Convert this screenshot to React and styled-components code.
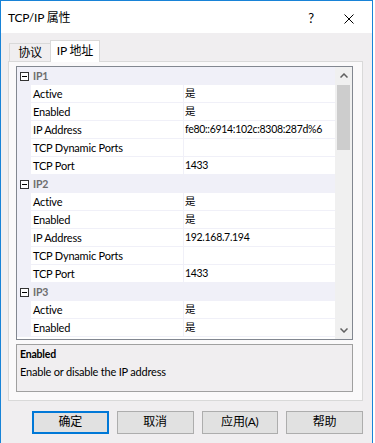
import React from 'react';
import styled, { createGlobalStyle } from 'styled-components';

const GlobalStyle = createGlobalStyle`
  html, body {
    margin: 0;
    padding: 0;
    background: #ffffff;
  }
  body {
    font-family: Lato, "Noto Sans CJK SC", sans-serif;
    font-size: 11px;
    letter-spacing: -0.2px;
    line-height: 1.2;
    color: #000;
  }
`;

const Window = styled.div`
  width: 373px;
  height: 443px;
  box-sizing: border-box;
  border: 1px solid #1883d7;
  border-bottom: none;
  display: flex;
  flex-direction: column;
  background: #f0eef0;
  overflow: hidden;
`;

const TitleBar = styled.div`
  height: 32px;
  flex: none;
  background: #ffffff;
  display: flex;
  align-items: center;
  padding-left: 7px;
  font-size: 12px;
`;

const Title = styled.div`
  flex: 1;
  padding-top: 3px;
`;

const TitleButton = styled.div`
  width: ${p => p.$w}px;
  height: 32px;
  display: flex;
  align-items: center;
  justify-content: center;
  padding-top: 3px;
  box-sizing: border-box;
  font-size: 13px;
  color: #000;
`;

const Body = styled.div`
  flex: 1;
  display: flex;
  flex-direction: column;
  padding: 8px 9px 0 7px;
`;

const TabRow = styled.div`
  display: flex;
  align-items: flex-end;
  height: 21px;
  padding-left: 1px;
  margin-bottom: -1px;
  position: relative;
  z-index: 1;
`;

const Tab = styled.div`
  box-sizing: border-box;
  width: ${p => (p.$active ? 50 : 42)}px;
  height: ${p => (p.$active ? 22 : 19)}px;
  padding-top: ${p => (p.$active ? 0 : 2)}px;
  border: 1px solid #d9d9d9;
  border-bottom: ${p => (p.$active ? 'none' : '1px solid #d9d9d9')};
  margin-left: ${p => (p.$active ? -1 : 0)}px;
  background: ${p => (p.$active ? '#ffffff' : '#f0eef0')};
  display: flex;
  align-items: center;
  justify-content: center;
  font-size: 12px;
`;

const Panel = styled.div`
  box-sizing: border-box;
  height: 340px;
  border: 1px solid #d9d9d9;
  background: #faf9fa;
  padding: 4px 9px 0 7px;
  display: flex;
  flex-direction: column;
`;

const Grid = styled.div`
  box-sizing: border-box;
  height: 274px;
  flex: none;
  border: 1px solid #828790;
  background: #ffffff;
  display: flex;
  overflow: hidden;
`;

const Rows = styled.div`
  flex: 1;
  display: flex;
  flex-direction: column;
  overflow: hidden;
`;

const Row = styled.div`
  flex: none;
  height: 18px;
  line-height: 17px;
  display: flex;
  background: ${p => (p.$category ? '#f0f0f8' : '#ffffff')};
`;

const Margin = styled.div`
  width: 14px;
  flex: none;
  background: #f0f0f8;
  display: flex;
  align-items: center;
  justify-content: center;
`;

const CategoryName = styled.div`
  display: flex;
  align-items: center;
  padding-left: 2px;
  font-size: 10.5px;
  font-weight: 700;
  color: #6d6d6d;
`;

const NameCell = styled.div`
  box-sizing: border-box;
  width: 153px;
  flex: none;
  padding-left: 2px;
  border-right: 1px solid #f0f0f8;
  border-bottom: 1px solid #f0f0f8;
  white-space: nowrap;
  overflow: hidden;
`;

const ValueCell = styled.div`
  box-sizing: border-box;
  flex: 1;
  min-width: 0;
  padding-left: 1px;
  border-bottom: 1px solid #f0f0f8;
  font-size: 10.5px;
  letter-spacing: -0.3px;
  white-space: nowrap;
  overflow: hidden;
`;

const ScrollBar = styled.div`
  width: 17px;
  flex: none;
  background: #f0f0f0;
  display: flex;
  flex-direction: column;
`;

const ScrollArrow = styled.div`
  height: 17px;
  flex: none;
  display: flex;
  align-items: center;
  justify-content: center;
`;

const ScrollTrack = styled.div`
  flex: 1;
  display: flex;
  flex-direction: column;
  padding: 1px 2px;
`;

const Thumb = styled.div`
  height: 65px;
  background: #cdcdcd;
`;

const Description = styled.div`
  box-sizing: border-box;
  height: 48px;
  flex: none;
  margin-top: 4px;
  border: 1px solid #a0a0a0;
  background: #f0eef0;
  padding: 2px 3px 0;
  display: flex;
  flex-direction: column;
`;

const DescTitle = styled.div`
  font-weight: 700;
  font-size: 10.5px;
  line-height: 14px;
`;

const DescText = styled.div`
  line-height: 14px;
  margin-top: 4px;
`;

const ButtonRow = styled.div`
  display: flex;
  gap: 8px;
  margin-top: 10px;
  padding-left: 24px;
`;

const Button = styled.div`
  box-sizing: border-box;
  width: 77px;
  height: 23px;
  background: #e1e1e1;
  border: 1px solid ${p => (p.$default ? '#0078d7' : '#adadad')};
  box-shadow: ${p => (p.$default ? 'inset 0 0 0 1px #0078d7' : 'none')};
  display: flex;
  align-items: center;
  justify-content: center;
  font-size: 12px;
`;

const CollapseIcon = () => (
  <svg width="9" height="9" viewBox="0 0 9 9">
    <rect x="0.5" y="0.5" width="8" height="8" fill="#fff" stroke="#333" />
    <line x1="2" y1="4.5" x2="7" y2="4.5" stroke="#000" />
  </svg>
);

const Chevron = ({ up }) => (
  <svg width="8" height="5" viewBox="0 0 8 5">
    <polyline
      points={up ? '0.5,4.5 4,1 7.5,4.5' : '0.5,0.5 4,4 7.5,0.5'}
      fill="none"
      stroke="#606060"
      strokeWidth="1.5"
    />
  </svg>
);

const CloseIcon = () => (
  <svg width="10" height="10" viewBox="0 0 10 10">
    <path d="M0.5 0.5 L9.5 9.5 M9.5 0.5 L0.5 9.5" stroke="#000" strokeWidth="1" />
  </svg>
);

// only the rows that fit in the visible part of the grid
const groups = [
  {
    name: 'IP1',
    props: [
      ['Active', '是'],
      ['Enabled', '是'],
      ['IP Address', 'fe80::6914:102c:8308:287d%6'],
      ['TCP Dynamic Ports', ''],
      ['TCP Port', '1433'],
    ],
  },
  {
    name: 'IP2',
    props: [
      ['Active', '是'],
      ['Enabled', '是'],
      ['IP Address', '192.168.7.194'],
      ['TCP Dynamic Ports', ''],
      ['TCP Port', '1433'],
    ],
  },
  {
    name: 'IP3',
    props: [
      ['Active', '是'],
      ['Enabled', '是'],
    ],
  },
];

export default function App() {
  return (
    <>
      <GlobalStyle />
      <Window>
        <TitleBar>
          <Title>TCP/IP 属性</Title>
          <TitleButton $w={30}>?</TitleButton>
          <TitleButton $w={46}><CloseIcon /></TitleButton>
        </TitleBar>
        <Body>
          <TabRow>
            <Tab>协议</Tab>
            <Tab $active>IP 地址</Tab>
          </TabRow>
          <Panel>
            <Grid>
              <Rows>
                {groups.map(g => (
                  <React.Fragment key={g.name}>
                    <Row $category>
                      <Margin><CollapseIcon /></Margin>
                      <CategoryName>{g.name}</CategoryName>
                    </Row>
                    {g.props.map(([k, v]) => (
                      <Row key={k}>
                        <Margin />
                        <NameCell>{k}</NameCell>
                        <ValueCell>{v}</ValueCell>
                      </Row>
                    ))}
                  </React.Fragment>
                ))}
              </Rows>
              <ScrollBar>
                <ScrollArrow><Chevron up /></ScrollArrow>
                <ScrollTrack><Thumb /></ScrollTrack>
                <ScrollArrow><Chevron /></ScrollArrow>
              </ScrollBar>
            </Grid>
            <Description>
              <DescTitle>Enabled</DescTitle>
              <DescText>Enable or disable the IP address</DescText>
            </Description>
          </Panel>
          <ButtonRow>
            <Button $default>确定</Button>
            <Button>取消</Button>
            <Button>应用(A)</Button>
            <Button>帮助</Button>
          </ButtonRow>
        </Body>
      </Window>
    </>
  );
}
